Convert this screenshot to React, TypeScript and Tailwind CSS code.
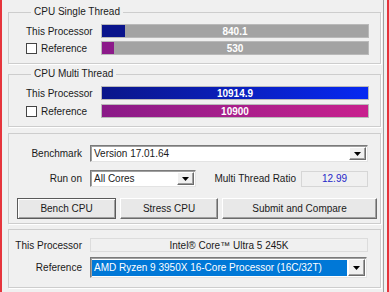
import type { ReactNode } from "react";

function DropArrow() {
  return (
    <div className="flex h-full w-[17px] shrink-0 items-center justify-center border border-t-white border-l-white border-b-[#6b6b6b] border-r-[#6b6b6b] bg-[#f0f0f0] shadow-[inset_-1px_-1px_0_#a0a0a0]">
      <svg width="7" height="4" viewBox="0 0 7 4">
        <polygon points="0,0 7,0 3.5,4" fill="#000" />
      </svg>
    </div>
  );
}

function Combo({
  value,
  width,
  height,
  selected,
}: {
  value: string;
  width: string;
  height: string;
  selected?: boolean;
}) {
  return (
    <div
      className={`flex ${width} ${height} shrink-0 items-stretch border border-t-[#7a7a7a] border-l-[#7a7a7a] border-b-[#e3e3e3] border-r-[#e3e3e3] bg-white p-[1px] shadow-[inset_1px_1px_0_#a0a0a0]`}
    >
      <div className="flex min-w-0 flex-1 items-center pr-[1px]">
        {selected ? (
          <span className="flex h-[16px] flex-1 items-center whitespace-nowrap bg-[#0078d7] pl-[2px] text-white">
            {value}
          </span>
        ) : (
          <span className="whitespace-nowrap pl-[2px]">{value}</span>
        )}
      </div>
      <DropArrow />
    </div>
  );
}

function Group({ title, children, className }: { title: string; children: ReactNode; className: string }) {
  return (
    <fieldset className={`border border-[#cdcdcd] shadow-[1px_1px_0_#fff] ${className}`}>
      <legend className="ml-[5px] px-[3px] leading-[14px]">{title}</legend>
      {children}
    </fieldset>
  );
}

function Bar({ value, fill, fillWidth, full }: { value: string; fill: string; fillWidth?: string; full?: boolean }) {
  return (
    <div className="relative flex h-[14px] flex-1 border border-[#b9b9b9] bg-[#a3a3a3]">
      <div className={`h-full ${full ? "w-full" : fillWidth} ${fill}`} />
      <span className="absolute inset-0 flex items-center justify-center font-bold text-white">{value}</span>
    </div>
  );
}

function CheckBox() {
  return <span className="inline-block h-[11px] w-[11px] border border-[#444] bg-white" />;
}

function Button({ label, width, primary }: { label: string; width: string; primary?: boolean }) {
  return (
    <button
      className={`${width} h-[21px] ${
        primary
          ? "border border-[#5a5a5a] shadow-[inset_1px_1px_0_#fff,inset_-1px_-1px_0_#a0a0a0]"
          : "border border-t-white border-l-white border-b-[#6b6b6b] border-r-[#6b6b6b] shadow-[inset_-1px_-1px_0_#a0a0a0]"
      } bg-[#e8e8e8] text-center`}
    >
      {label}
    </button>
  );
}

export default function App() {
  return (
    <div className="h-[292px] w-[389px] overflow-hidden border-x-2 border-[#e6343c] bg-[#f0f0f0] pr-[3px] font-['Liberation_Sans',Arial,sans-serif] text-[10px] text-[#1a1a1a]">
      <div className="flex h-full flex-col border-r border-[#a0a0a0] pl-[6px] pr-[2px]">
        {/* single thread */}
        <Group title="CPU Single Thread" className="mt-[5px] pb-[8px] pl-[17px] pr-[11px] pt-[5px]">
          <div className="flex flex-col gap-[3px]">
            <div className="flex h-[14px] items-center">
              <span className="w-[75px]">This Processor</span>
              <Bar value="840.1" fill="bg-[#0a148c]" fillWidth="w-[23px]" />
            </div>
            <div className="flex h-[14px] items-center">
              <span className="flex w-[75px] items-center gap-[4px]">
                <CheckBox />
                Reference
              </span>
              <Bar value="530" fill="bg-[#8c1a8a]" fillWidth="w-[12px]" />
            </div>
          </div>
        </Group>

        {/* multi thread */}
        <Group title="CPU Multi Thread" className="mt-[3px] pb-[8px] pl-[17px] pr-[11px] pt-[5px]">
          <div className="flex flex-col gap-[4px]">
            <div className="flex h-[14px] items-center">
              <span className="w-[75px]">This Processor</span>
              <Bar value="10914.9" fill="bg-gradient-to-r from-[#0a168a] to-[#0628f2]" full />
            </div>
            <div className="flex h-[14px] items-center">
              <span className="flex w-[75px] items-center gap-[4px]">
                <CheckBox />
                Reference
              </span>
              <Bar value="10900" fill="bg-gradient-to-r from-[#8a1a88] to-[#c8208e]" full />
            </div>
          </div>
        </Group>

        {/* benchmark options */}
        <div className="mt-[6px] flex flex-col border border-[#cdcdcd] pb-[4px] pt-[11px] shadow-[1px_1px_0_#fff]">
          <div className="flex h-[17px] items-center gap-[8px]">
            <span className="w-[73px] text-right">Benchmark</span>
            <Combo value="Version 17.01.64" width="w-[278px]" height="h-[17px]" />
          </div>
          <div className="mt-[8px] flex h-[17px] items-center gap-[8px] pr-[12px]">
            <span className="w-[73px] text-right">Run on</span>
            <Combo value="All Cores" width="w-[106px]" height="h-[17px]" />
            <div className="flex flex-1 items-center justify-end gap-[5px]">
              <span>Multi Thread Ratio</span>
              <span className="flex h-[16px] w-[67px] items-center justify-center border border-[#d6d6d6] text-[#2626c8]">
                12.99
              </span>
            </div>
          </div>
          <div className="mt-[11px] flex gap-[4px] pl-[8px]">
            <Button label="Bench CPU" width="w-[99px]" primary />
            <Button label="Stress CPU" width="w-[98px]" />
            <Button label="Submit and Compare" width="w-[155px]" />
          </div>
        </div>

        {/* processors */}
        <div className="mt-[5px] flex flex-col border border-[#cdcdcd] pb-[9px] pt-[8px] shadow-[1px_1px_0_#fff]">
          <div className="flex h-[14px] items-center gap-[8px]">
            <span className="w-[73px] text-right">This Processor</span>
            <span className="flex h-[14px] w-[278px] items-center justify-center border border-[#dcdcdc]">
              Intel® Core™ Ultra 5 245K
            </span>
          </div>
          <div className="mt-[5px] flex h-[21px] items-center gap-[8px]">
            <span className="w-[73px] text-right">Reference</span>
            <Combo
              value="AMD Ryzen 9 3950X 16-Core Processor (16C/32T)"
              width="w-[277px]"
              height="h-[21px]"
              selected
            />
          </div>
        </div>
      </div>
    </div>
  );
}
